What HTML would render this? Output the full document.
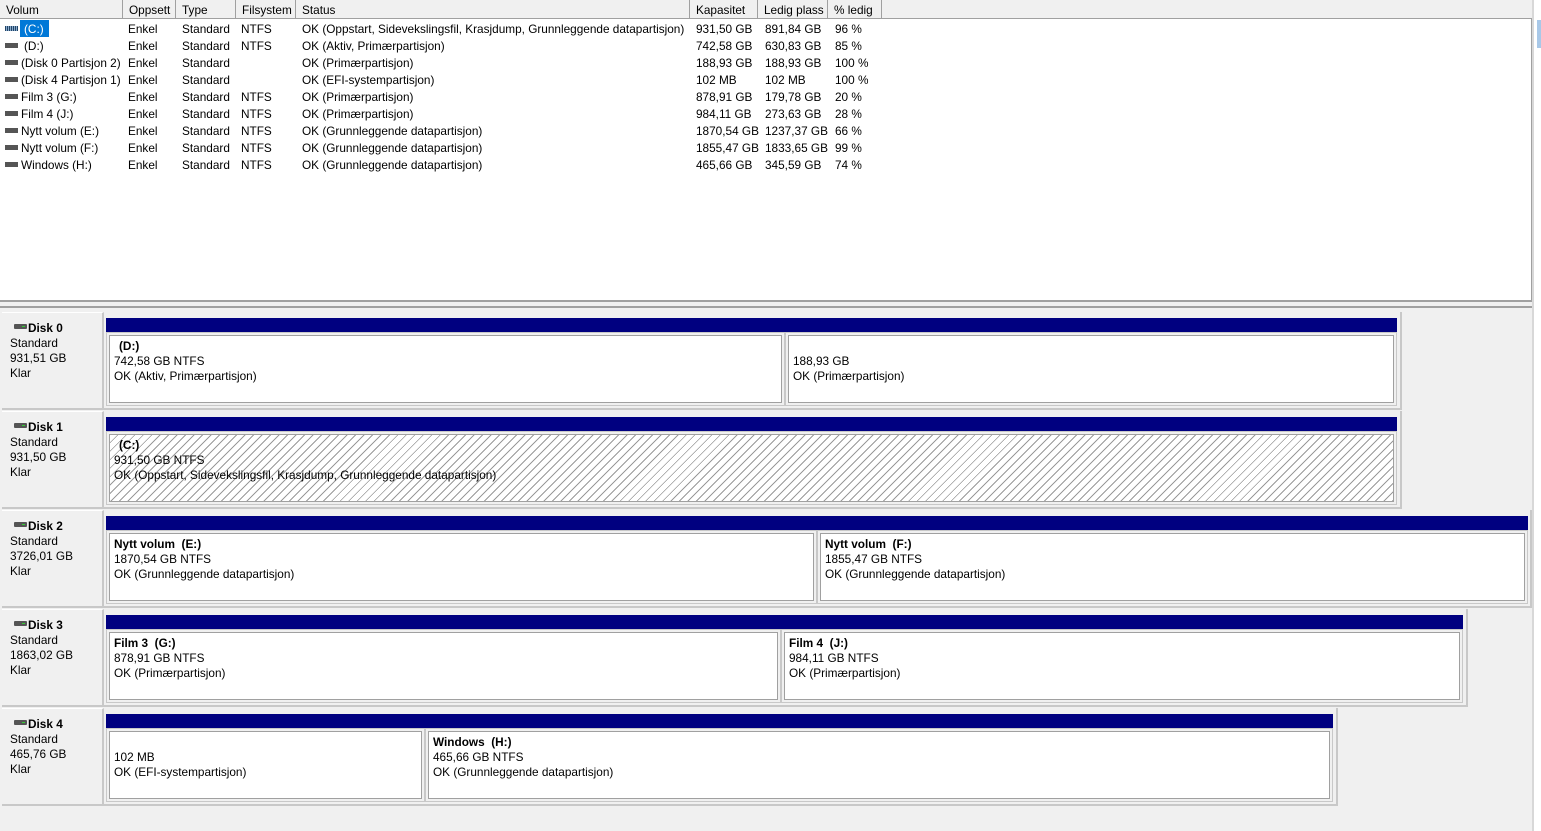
<!DOCTYPE html>
<html><head><meta charset="utf-8"><style>
*{margin:0;padding:0;box-sizing:border-box}
body{width:1541px;height:831px;background:#f0f0f0;font-family:"Liberation Sans",sans-serif;font-size:11.8px;color:#000;position:relative;overflow:hidden}
.a{position:absolute;white-space:nowrap}
#top{position:absolute;left:0;top:0;width:1532px;height:302px;background:#fff;border-bottom:2px solid #a0a0a0;border-right:1px solid #a0a0a0}
.hd{position:absolute;top:0;height:19px;background:#f0f0f0;border-right:1px solid #a0a0a0;border-bottom:1px solid #a0a0a0;padding:3px 0 0 6px;font-size:11.8px}
.row{position:absolute;left:0;height:17px;width:900px}
.row span{position:absolute;top:2px}
.dr{display:inline-block;width:13px;height:5px;background:#555;position:absolute;left:5px;top:6px}
.lbl{position:absolute;left:2px;width:102px;height:98px;background:#f0f0f0;border-right:2px solid #c8c8c8;border-bottom:2px solid #c8c8c8;border-top:1px solid #fff}
.lbl div{position:absolute;left:8px}
.out{position:absolute;left:104px;height:98px;border-right:2px solid #c8c8c8;border-bottom:2px solid #c8c8c8}
.p{position:absolute;height:86px}
.bar{position:absolute;left:0;right:0;top:0;height:14px;background:#000080}
.box{position:absolute;left:0;right:0;top:14px;height:74px;background:#f0f0f0;border:1px solid #c8c8c8;padding:2px}
.in{width:100%;height:100%;background:#fff;border:1px solid #a0a0a0;position:relative}
.in div{position:absolute;left:4px;white-space:nowrap}
.hatch .in{background:repeating-linear-gradient(135deg,#fff 0 5px,#9a9a9a 5px 6px)}
b{font-weight:bold}
.ico{position:absolute;left:12px;width:13px;height:5px;background:#555;border-radius:1px}
.ico:after{content:"";position:absolute;right:2px;top:2px;width:3px;height:1px;background:#3c3}
</style></head><body>
<div id="top">
<div class="hd" style="left:0;width:123px">Volum</div>
<div class="hd" style="left:123px;width:53px">Oppsett</div>
<div class="hd" style="left:176px;width:60px">Type</div>
<div class="hd" style="left:236px;width:60px">Filsystem</div>
<div class="hd" style="left:296px;width:394px">Status</div>
<div class="hd" style="left:690px;width:68px">Kapasitet</div>
<div class="hd" style="left:758px;width:70px">Ledig plass</div>
<div class="hd" style="left:828px;width:54px">% ledig</div>
<div class="hd" style="left:882px;width:650px;border-right:0"></div>

<div class="row" style="top:20px"><i class="dr" style="background:repeating-linear-gradient(90deg,#246 0 1px,#8ac 1px 2px)"></i><span style="left:20px;top:0;background:#0078d7;color:#fff;padding:2px 5px 1px 4px"> (C:)</span><span style="left:128px">Enkel</span><span style="left:182px">Standard</span><span style="left:241px">NTFS</span><span style="left:302px">OK (Oppstart, Sidevekslingsfil, Krasjdump, Grunnleggende datapartisjon)</span><span style="left:696px">931,50 GB</span><span style="left:765px">891,84 GB</span><span style="left:835px">96 %</span></div>
<div class="row" style="top:37px"><i class="dr"></i><span style="left:24px">(D:)</span><span style="left:128px">Enkel</span><span style="left:182px">Standard</span><span style="left:241px">NTFS</span><span style="left:302px">OK (Aktiv, Primærpartisjon)</span><span style="left:696px">742,58 GB</span><span style="left:765px">630,83 GB</span><span style="left:835px">85 %</span></div>
<div class="row" style="top:54px"><i class="dr"></i><span style="left:21px">(Disk 0 Partisjon 2)</span><span style="left:128px">Enkel</span><span style="left:182px">Standard</span><span style="left:302px">OK (Primærpartisjon)</span><span style="left:696px">188,93 GB</span><span style="left:765px">188,93 GB</span><span style="left:835px">100 %</span></div>
<div class="row" style="top:71px"><i class="dr"></i><span style="left:21px">(Disk 4 Partisjon 1)</span><span style="left:128px">Enkel</span><span style="left:182px">Standard</span><span style="left:302px">OK (EFI-systempartisjon)</span><span style="left:696px">102 MB</span><span style="left:765px">102 MB</span><span style="left:835px">100 %</span></div>
<div class="row" style="top:88px"><i class="dr"></i><span style="left:21px">Film 3 (G:)</span><span style="left:128px">Enkel</span><span style="left:182px">Standard</span><span style="left:241px">NTFS</span><span style="left:302px">OK (Primærpartisjon)</span><span style="left:696px">878,91 GB</span><span style="left:765px">179,78 GB</span><span style="left:835px">20 %</span></div>
<div class="row" style="top:105px"><i class="dr"></i><span style="left:21px">Film 4 (J:)</span><span style="left:128px">Enkel</span><span style="left:182px">Standard</span><span style="left:241px">NTFS</span><span style="left:302px">OK (Primærpartisjon)</span><span style="left:696px">984,11 GB</span><span style="left:765px">273,63 GB</span><span style="left:835px">28 %</span></div>
<div class="row" style="top:122px"><i class="dr"></i><span style="left:21px">Nytt volum (E:)</span><span style="left:128px">Enkel</span><span style="left:182px">Standard</span><span style="left:241px">NTFS</span><span style="left:302px">OK (Grunnleggende datapartisjon)</span><span style="left:696px">1870,54 GB</span><span style="left:765px">1237,37 GB</span><span style="left:835px">66 %</span></div>
<div class="row" style="top:139px"><i class="dr"></i><span style="left:21px">Nytt volum (F:)</span><span style="left:128px">Enkel</span><span style="left:182px">Standard</span><span style="left:241px">NTFS</span><span style="left:302px">OK (Grunnleggende datapartisjon)</span><span style="left:696px">1855,47 GB</span><span style="left:765px">1833,65 GB</span><span style="left:835px">99 %</span></div>
<div class="row" style="top:156px"><i class="dr"></i><span style="left:21px">Windows (H:)</span><span style="left:128px">Enkel</span><span style="left:182px">Standard</span><span style="left:241px">NTFS</span><span style="left:302px">OK (Grunnleggende datapartisjon)</span><span style="left:696px">465,66 GB</span><span style="left:765px">345,59 GB</span><span style="left:835px">74 %</span></div>
</div>
<div class="a" style="left:1532px;top:0;width:9px;height:831px;background:#fff;border-left:2px solid #d8d8d8"></div>
<div class="a" style="left:1537px;top:20px;width:4px;height:28px;background:#a8c8e8"></div>
<div class="a" style="left:0;top:306px;width:1532px;height:2px;background:#a0a0a0"></div>

<div class="lbl" style="top:312px"><i class="ico" style="top:11px"></i><div style="top:8px;left:26px"><b>Disk 0</b></div><div style="top:23px">Standard</div><div style="top:38px">931,51 GB</div><div style="top:53px">Klar</div></div>
<div class="out" style="top:312px;width:1298px"></div>
<div class="p" style="left:106px;top:318px;width:679px"><div class="bar"></div><div class="box"><div class="in"><div style="top:3px;left:9px"><b>(D:)</b></div><div style="top:18px">742,58 GB NTFS</div><div style="top:33px">OK (Aktiv, Primærpartisjon)</div></div></div></div>
<div class="p" style="left:785px;top:318px;width:612px"><div class="bar"></div><div class="box"><div class="in"><div style="top:18px">188,93 GB</div><div style="top:33px">OK (Primærpartisjon)</div></div></div></div>

<div class="lbl" style="top:411px"><i class="ico" style="top:11px"></i><div style="top:8px;left:26px"><b>Disk 1</b></div><div style="top:23px">Standard</div><div style="top:38px">931,50 GB</div><div style="top:53px">Klar</div></div>
<div class="out" style="top:411px;width:1298px"></div>
<div class="p hatch" style="left:106px;top:417px;width:1291px"><div class="bar"></div><div class="box"><div class="in"><div style="top:3px;left:9px"><b>(C:)</b></div><div style="top:18px">931,50 GB NTFS</div><div style="top:33px">OK (Oppstart, Sidevekslingsfil, Krasjdump, Grunnleggende datapartisjon)</div></div></div></div>

<div class="lbl" style="top:510px"><i class="ico" style="top:11px"></i><div style="top:8px;left:26px"><b>Disk 2</b></div><div style="top:23px">Standard</div><div style="top:38px">3726,01 GB</div><div style="top:53px">Klar</div></div>
<div class="out" style="top:510px;width:1428px"></div>
<div class="p" style="left:106px;top:516px;width:711px"><div class="bar"></div><div class="box"><div class="in"><div style="top:3px"><b>Nytt volum &nbsp;(E:)</b></div><div style="top:18px">1870,54 GB NTFS</div><div style="top:33px">OK (Grunnleggende datapartisjon)</div></div></div></div>
<div class="p" style="left:817px;top:516px;width:711px"><div class="bar"></div><div class="box"><div class="in"><div style="top:3px"><b>Nytt volum &nbsp;(F:)</b></div><div style="top:18px">1855,47 GB NTFS</div><div style="top:33px">OK (Grunnleggende datapartisjon)</div></div></div></div>

<div class="lbl" style="top:609px"><i class="ico" style="top:11px"></i><div style="top:8px;left:26px"><b>Disk 3</b></div><div style="top:23px">Standard</div><div style="top:38px">1863,02 GB</div><div style="top:53px">Klar</div></div>
<div class="out" style="top:609px;width:1364px"></div>
<div class="p" style="left:106px;top:615px;width:675px"><div class="bar"></div><div class="box"><div class="in"><div style="top:3px"><b>Film 3 &nbsp;(G:)</b></div><div style="top:18px">878,91 GB NTFS</div><div style="top:33px">OK (Primærpartisjon)</div></div></div></div>
<div class="p" style="left:781px;top:615px;width:682px"><div class="bar"></div><div class="box"><div class="in"><div style="top:3px"><b>Film 4 &nbsp;(J:)</b></div><div style="top:18px">984,11 GB NTFS</div><div style="top:33px">OK (Primærpartisjon)</div></div></div></div>

<div class="lbl" style="top:708px"><i class="ico" style="top:11px"></i><div style="top:8px;left:26px"><b>Disk 4</b></div><div style="top:23px">Standard</div><div style="top:38px">465,76 GB</div><div style="top:53px">Klar</div></div>
<div class="out" style="top:708px;width:1234px"></div>
<div class="p" style="left:106px;top:714px;width:319px"><div class="bar"></div><div class="box"><div class="in"><div style="top:18px">102 MB</div><div style="top:33px">OK (EFI-systempartisjon)</div></div></div></div>
<div class="p" style="left:425px;top:714px;width:908px"><div class="bar"></div><div class="box"><div class="in"><div style="top:3px"><b>Windows &nbsp;(H:)</b></div><div style="top:18px">465,66 GB NTFS</div><div style="top:33px">OK (Grunnleggende datapartisjon)</div></div></div></div>
</body></html>
